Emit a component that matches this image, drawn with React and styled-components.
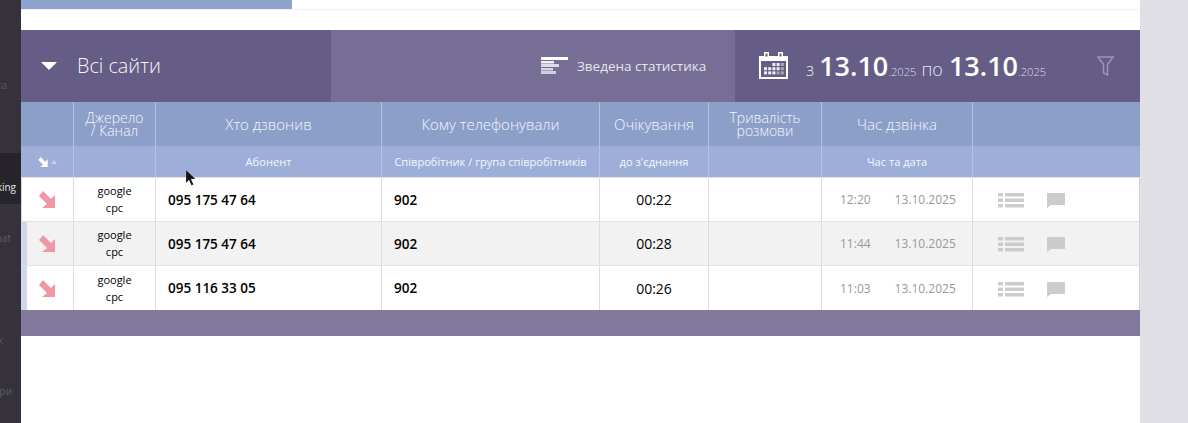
import React from 'react'
import styled, { createGlobalStyle } from 'styled-components'

const COLS = '53px 82px 226px 218px 109px 113px 151px 167px'

const GlobalStyle = createGlobalStyle`
  html, body {
    margin: 0;
    padding: 0;
    height: 423px;
    overflow: hidden;
    background: #e0dfe5;
    font-family: 'Open Sans', sans-serif;
  }
`

const Page = styled.div`
  display: flex;
  width: 1188px;
  height: 423px;
  position: relative;
`

const Sidebar = styled.nav`
  width: 21px;
  flex-shrink: 0;
  background: #35323c;
  overflow: hidden;
`

const SideItem = styled.div`
  height: 51px;
  box-sizing: border-box;
  padding-top: 27px;
  padding-right: ${props => props.$end}px;
  display: flex;
  justify-content: flex-end;
  font-size: 10px;
  line-height: 14px;
  white-space: nowrap;
  background: ${props => props.$active ? '#27252b' : 'transparent'};
  color: ${props => props.$active ? '#e4e4e8' : '#5f5c66'};
`

const Main = styled.main`
  width: 1119px;
  background: #fff;
  display: flex;
  flex-direction: column;
`

const Progress = styled.div`
  height: 9px;
  border-bottom: 1px solid #f0f0f0;
  margin-bottom: 20px;
`

const ProgressFill = styled.div`
  width: 271px;
  height: 9px;
  background: #8fa3cc;
`

const Header = styled.header`
  height: 72px;
  display: flex;
  color: #fff;
`

const SiteSelect = styled.div`
  width: 310px;
  background: #655d85;
  display: flex;
  align-items: center;
  padding: 0 0 1px 20px;
  box-sizing: border-box;
`

const Caret = styled.span`
  width: 0;
  height: 0;
  border-left: 8px solid transparent;
  border-right: 8px solid transparent;
  border-top: 8px solid #fff;
  margin: 1px 20px 0 0;
`

const SiteName = styled.span`
  font-size: 19.8px;
  font-weight: 300;
  color: #f6f5fa;
`

const Summary = styled.div`
  width: 404px;
  background: #766e94;
  display: flex;
  align-items: center;
  padding: 0 0 1px 210px;
  box-sizing: border-box;
  font-size: 13.5px;
  color: #e6e5ef;
  gap: 9px;
`

const DateBar = styled.div`
  width: 405px;
  background: #655d85;
  display: flex;
  align-items: center;
  padding: 0 0 1px 24px;
  box-sizing: border-box;
`

const DateWord = styled.span`
  font-size: 18px;
  font-weight: 300;
  color: #e6e5ef;
  margin: 0 ${props => props.$right}px 0 ${props => props.$left}px;
`

const DateMain = styled.span`
  font-size: 27px;
  font-weight: 600;
  color: #fff;
`

const DateYear = styled.span`
  font-size: 11.2px;
  font-weight: 300;
  color: #dcdbe8;
`

const DateRange = styled.div`
  display: flex;
  align-items: baseline;
  margin-left: 18px;
  width: 291px;
`

const HeadRow = styled.div`
  display: grid;
  grid-template-columns: ${COLS};
  height: ${props => props.$height}px;
  background: ${props => props.$bg};
`

const HeadCell = styled.div`
  border-right: 1px solid #b4c2e0;
  display: flex;
  align-items: center;
  justify-content: center;
  gap: 3px;
  text-align: center;
  color: #f2f6fd;
  font-weight: ${props => props.$sub ? 400 : 300};
  font-size: ${props => props.$sub ? '11.1px' : props.$tight ? '14px' : '15px'};
  line-height: ${props => props.$tight ? '13px' : '16px'};

  &:last-child {
    border-right: none;
  }
`

const Row = styled.div`
  display: grid;
  grid-template-columns: ${COLS};
  height: ${props => props.$height}px;
  box-sizing: border-box;
  border-top: 1px solid #e2e2e2;
  background: ${props => props.$odd ? '#f2f2f2' : '#fff'};
  position: relative;
`

const Strip = styled.span`
  position: absolute;
  left: 0;
  top: 0;
  bottom: 0;
  width: ${props => props.$wide ? 6 : 1}px;
  background: #d0d7e8;
`

const Cell = styled.div`
  border-right: 1px solid #dcdcdc;
  display: flex;
  align-items: center;
  justify-content: ${props => props.$left ? 'flex-start' : 'center'};
  padding-left: ${props => props.$left ? 12 : 0}px;
  color: #000;
  font-size: 14px;
`

const Phone = styled(Cell)`
  font-size: 13.5px;
  font-weight: 600;
`

const Source = styled(Cell)`
  flex-direction: column;
  font-size: 11px;
  line-height: 17px;
  padding-bottom: 1px;
`

const TimeCell = styled(Cell)`
  justify-content: flex-start;
  padding-left: 18px;
  gap: 24px;
  font-size: 12px;
  color: #999;
`

const Actions = styled(Cell)`
  justify-content: flex-start;
  padding: 2px 0 0 25px;
  gap: 23px;
  border-right: 1px solid #d4d4d4;
`

const Footer = styled.div`
  height: 26px;
  background: #83799d;
`

const Rest = styled.div`
  flex: 1;
  background: #fff;
`

const Pointer = styled.svg`
  position: absolute;
  left: 185px;
  top: 169px;
`

const CalendarIcon = () => (
  <svg width="29" height="27" viewBox="0 0 29 27">
    <path fill="#fff" d="M0 4h5V0h5v4h9V0h5v4h5v23H0z" />
    <rect x="6.5" y="1.5" width="2" height="3" fill="#655d85" />
    <rect x="20.5" y="1.5" width="2" height="3" fill="#655d85" />
    <rect x="2" y="9" width="25" height="16" fill="#655d85" />
    {[0, 1, 2, 3, 4].map(c => [0, 1, 2].map(r => (
      (r === 0 && c < 2) ? null : (
        <rect key={`${c}-${r}`} x={5 + c * 4.2} y={11 + r * 4.2} width="3" height="3" fill="#fff" opacity={c > 3 || (r === 2 && c > 2) ? 0.45 : 0.9} />
      )
    )))}
  </svg>
)

const StatsIcon = () => (
  <svg width="27" height="17" viewBox="0 0 27 17">
    <rect x="0" y="0" width="27" height="3" fill="#fff" />
    <rect x="0" y="4" width="13" height="2.5" fill="#f0eff6" />
    <rect x="0" y="7" width="18" height="3" fill="#dddcea" />
    <rect x="0" y="11" width="12" height="2.5" fill="#d5d3e4" />
    <rect x="0" y="14" width="15" height="3" fill="#cfcde0" />
  </svg>
)

const FilterIcon = () => (
  <svg width="17" height="20" viewBox="0 0 17 20">
    <path d="M1 1h15l-5.5 7.5V19l-4-2V8.5z" fill="none" stroke="#9a94b0" strokeWidth="1.6" />
  </svg>
)

const ARROW = 'M0 5 4 0l8 8 4-4v13H3l5-4z'

const ArrowIcon = () => (
  <svg width="16" height="17" viewBox="0 0 16 17">
    <path fill="#ee97a5" d={ARROW} />
  </svg>
)

const SortArrow = () => (
  <svg width="10" height="10" viewBox="0 0 16 17">
    <path fill="#fff" d={ARROW} />
  </svg>
)

const SortUp = () => (
  <svg width="6" height="4" viewBox="0 0 6 4">
    <path fill="#c5d0ea" d="M3 0l3 4H0z" />
  </svg>
)

const ListIcon = () => (
  <svg width="26" height="15" viewBox="0 0 26 15">
    <g fill="#cccccc">
      <rect x="0" y="0" width="5" height="3.5" />
      <rect x="7" y="0" width="19" height="3.5" />
      <rect x="0" y="5.5" width="5" height="3.5" />
      <rect x="7" y="5.5" width="19" height="3.5" />
      <rect x="0" y="11" width="5" height="3.5" />
      <rect x="7" y="11" width="19" height="3.5" />
    </g>
  </svg>
)

const ChatIcon = () => (
  <svg width="18" height="15" viewBox="0 0 18 15">
    <path fill="#cccccc" d="M0 0h18v12H4l-4 3z" />
  </svg>
)

const sideItems = [
  { text: '', end: 0 },
  { text: 'ка', end: 14 },
  { text: '', end: 0 },
  { text: 'king', end: 5, active: true },
  { text: 'nat', end: 10 },
  { text: '', end: 0 },
  { text: 'k', end: 18 },
  { text: 'гри', end: 9 },
  { text: '', end: 0 },
]

const calls = [
  { phone: '095 175 47 64', wait: '00:22', time: '12:20', height: 44 },
  { phone: '095 175 47 64', wait: '00:28', time: '11:44', height: 44 },
  { phone: '095 116 33 05', wait: '00:26', time: '11:03', height: 45 },
]

export default function App() {
  return (
    <Page>
      <GlobalStyle />
      <Sidebar>
        {sideItems.map((item, i) => (
          <SideItem key={i} $active={item.active} $end={item.end}>{item.text}</SideItem>
        ))}
      </Sidebar>
      <Main>
        <Progress><ProgressFill /></Progress>
        <Header>
          <SiteSelect>
            <Caret />
            <SiteName>Всі сайти</SiteName>
          </SiteSelect>
          <Summary>
            <StatsIcon />
            Зведена статистика
          </Summary>
          <DateBar>
            <CalendarIcon />
            <DateRange>
              <DateWord $left={0} $right={5}>з</DateWord>
              <DateMain>13.10</DateMain>
              <DateYear>.2025</DateYear>
              <DateWord $left={5} $right={6}>по</DateWord>
              <DateMain>13.10</DateMain>
              <DateYear>.2025</DateYear>
            </DateRange>
            <FilterIcon />
          </DateBar>
        </Header>
        <HeadRow $height={44} $bg="#8c9fc8">
          <HeadCell />
          <HeadCell $tight>Джерело<br />/ Канал</HeadCell>
          <HeadCell>Хто дзвонив</HeadCell>
          <HeadCell>Кому телефонували</HeadCell>
          <HeadCell>Очікування</HeadCell>
          <HeadCell $tight>Тривалість<br />розмови</HeadCell>
          <HeadCell>Час дзвінка</HeadCell>
          <HeadCell />
        </HeadRow>
        <HeadRow $height={31} $bg="#9dafd8">
          <HeadCell $sub><SortArrow /><SortUp /></HeadCell>
          <HeadCell $sub />
          <HeadCell $sub>Абонент</HeadCell>
          <HeadCell $sub>Співробітник / група співробітників</HeadCell>
          <HeadCell $sub>до з'єднання</HeadCell>
          <HeadCell $sub />
          <HeadCell $sub>Час та дата</HeadCell>
          <HeadCell $sub />
        </HeadRow>
        {calls.map((call, i) => (
          <Row key={i} $odd={i === 1} $height={call.height}>
            <Strip $wide={i > 0} />
            <Cell><ArrowIcon /></Cell>
            <Source><span>google</span><span>cpc</span></Source>
            <Phone $left>{call.phone}</Phone>
            <Phone $left>902</Phone>
            <Cell>{call.wait}</Cell>
            <Cell />
            <TimeCell><span>{call.time}</span><span>13.10.2025</span></TimeCell>
            <Actions><ListIcon /><ChatIcon /></Actions>
          </Row>
        ))}
        <Footer />
        <Rest />
      </Main>
      <Pointer width="12" height="18" viewBox="0 0 12 18">
        <path d="M1 1v13l3-3 2.5 5.5 2-1L6 10h4.5z" fill="#111" stroke="#fff" strokeOpacity="0.4" strokeWidth="0.5" />
      </Pointer>
    </Page>
  )
}
